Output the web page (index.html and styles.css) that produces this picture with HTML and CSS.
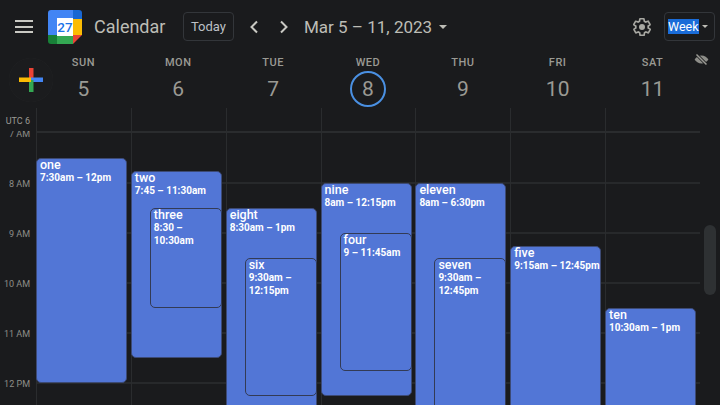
FILE: index.html
```html
<!DOCTYPE html>
<html lang="en">
<head>
  <meta charset="UTF-8" />
  <title>Calendar - Week of March 5, 2023</title>
  <link rel="stylesheet" href="styles.css">
</head>
<body>
  <header class="topbar">
    <div class="menu-btn"><span></span><span></span><span></span></div>
    <svg class="logo" width="34" height="34" viewBox="0 0 34 34">
      <path d="M3 0H25V9H9V25H0V3A3 3 0 0 1 3 0Z" fill="#4285f4"/>
      <path d="M25 0H31A3 3 0 0 1 34 3V9H25Z" fill="#1967d2"/>
      <rect x="25" y="9" width="9" height="16" fill="#fbbc04"/>
      <path d="M0 25H9V34H3A3 3 0 0 1 0 31Z" fill="#188038"/>
      <rect x="9" y="25" width="16" height="9" fill="#34a853"/>
      <path d="M25 25H34L25 34Z" fill="#ea4335"/>
      <rect x="9" y="8" width="16" height="18" fill="#fff"/>
      <text x="17" y="22" text-anchor="middle" class="logo-num">27</text>
    </svg>
    <span class="app-name">Calendar</span>
    <div class="today-btn">Today</div>
    <svg class="arrow prev" width="10" height="14" viewBox="0 0 10 14"><path d="M8 1.5 2.5 7 8 12.5" /></svg>
    <svg class="arrow next" width="10" height="14" viewBox="0 0 10 14"><path d="M2 1.5 7.5 7 2 12.5" /></svg>
    <div class="date-range">Mar 5 – 11, 2023</div>
    <span class="caret date-caret"></span>
    <svg class="gear" width="20" height="20" viewBox="0 0 24 24">
      <path d="M19.4 13c.1-.3.1-.7.1-1s0-.7-.1-1l2.1-1.6c.2-.2.2-.4.1-.6l-2-3.5c-.1-.2-.4-.3-.6-.2l-2.5 1c-.5-.4-1.100-.7-1.700-1l-.4-2.600c0-.3-.2-.4-.5-.4h-4c-.3 0-.5.100-.5.400l-.4 2.600c-.6.300-1.200.6-1.700 1l-2.500-1c-.2-.100-.5 0-.6.200l-2 3.500c-.1.200-.1.400.1.600L4.600 11c-.1.300-.1.700-.1 1s0 .7.100 1l-2.100 1.600c-.2.200-.2.400-.1.600l2 3.500c.1.200.4.300.6.200l2.500-1c.5.400 1.100.700 1.700 1l.4 2.600c0 .3.200.4.500.4h4c.3 0 .5-.1.500-.4l.4-2.600c.6-.3 1.200-.6 1.700-1l2.500 1c.2.100.5 0 .6-.2l2-3.500c.1-.2.100-.4-.1-.6Z" class="gear-body"/>
      <circle cx="12" cy="12" r="3.600" class="gear-hub"/>
    </svg>
    <div class="view-select"><span class="selected-text">Week</span><span class="caret small"></span></div>
  </header>

  <div class="fab">
    <svg width="26" height="26" viewBox="0 0 26 26">
      <rect x="11" y="1" width="4.500" height="12" fill="#ea4335"/>
      <rect x="13" y="10.500" width="12" height="4.500" fill="#4285f4"/>
      <rect x="11" y="13" width="4.500" height="12" fill="#34a853"/>
      <rect x="1" y="10.500" width="12" height="4.500" fill="#fbbc04"/>
    </svg>
  </div>

  <div class="day-head">
    <div class="day-label"><span class="day-name">SUN</span><span class="day-num">5</span></div>
    <div class="day-label"><span class="day-name">MON</span><span class="day-num">6</span></div>
    <div class="day-label"><span class="day-name">TUE</span><span class="day-num">7</span></div>
    <div class="day-label"><span class="day-name">WED</span><span class="day-num today">8</span></div>
    <div class="day-label"><span class="day-name">THU</span><span class="day-num">9</span></div>
    <div class="day-label"><span class="day-name">FRI</span><span class="day-num">10</span></div>
    <div class="day-label"><span class="day-name">SAT</span><span class="day-num">11</span></div>
    <svg class="eye-off" width="15" height="15" viewBox="0 0 24 24">
      <path d="M12 5.500C7 5.500 3 8.500 1 12c2 3.500 6 6.500 11 6.500S21 15.500 23 12c-2-3.500-6-6.500-11-6.500Z" fill="#8d8d88"/>
      <path d="M4 4 20 20" stroke="#1a1b1d" stroke-width="5"/>
      <path d="M4 4 20 20" stroke="#9a9a94" stroke-width="2.400"/>
    </svg>
  </div>

  <main class="schedule">
    <div class="gutter">
      <div class="utc">UTC 6</div>
      <div class="hours">
        <div class="hour">7 AM</div>
        <div class="hour">8 AM</div>
        <div class="hour">9 AM</div>
        <div class="hour">10 AM</div>
        <div class="hour">11 AM</div>
        <div class="hour">12 PM</div>
      </div>
    </div>

    <div class="week">
      <div class="day">
        <div class="event" style="top: 50px; height: 225px"><b>one</b><span>7:30am – 12pm</span></div>
      </div>
      <div class="day">
        <div class="event" style="top: 62.5px; height: 187.5px"><b>two</b><span>7:45 – 11:30am</span></div>
        <div class="event nested" style="top: 100px; height: 100px"><b>three</b><span>8:30 – 10:30am</span></div>
      </div>
      <div class="day">
        <div class="event" style="top: 100px; height: 325px"><b>eight</b><span>8:30am – 1pm</span></div>
        <div class="event nested" style="top: 150px; height: 138px"><b>six</b><span>9:30am – 12:15pm</span></div>
      </div>
      <div class="day">
        <div class="event" style="top: 75px; height: 213px"><b>nine</b><span>8am – 12:15pm</span></div>
        <div class="event nested" style="top: 125px; height: 138px"><b>four</b><span>9 – 11:45am</span></div>
      </div>
      <div class="day">
        <div class="event" style="top: 75px; height: 525px"><b>eleven</b><span>8am – 6:30pm</span></div>
        <div class="event nested" style="top: 150px; height: 163px"><b>seven</b><span>9:30am – 12:45pm</span></div>
      </div>
      <div class="day">
        <div class="event" style="top: 137.5px; height: 175px"><b>five</b><span>9:15am – 12:45pm</span></div>
      </div>
      <div class="day">
        <div class="event" style="top: 200px; height: 125px"><b>ten</b><span>10:30am – 1pm</span></div>
      </div>
    </div>

    <div class="scroll-thumb"></div>
  </main>
</body>
</html>
```

FILE: styles.css
```css
* {
  box-sizing: border-box;
}

html,
body {
  margin: 0;
  height: 405px;
  overflow: hidden;
}

body {
  position: relative;
  font-family: Roboto, "Liberation Sans", sans-serif;
  background-color: #1a1b1d;
  color: #bdc1c6;
}

.topbar {
  display: flex;
  align-items: center;
  height: 53px;
  padding-left: 15px;
}

.menu-btn {
  display: flex;
  flex-direction: column;
  gap: 3.500px;
  width: 18px;
  margin-right: 15px;
}

.menu-btn span {
  height: 2px;
  background-color: #c9c9c3;
}

.logo {
  flex: none;
  margin-right: 12px;
}

.logo-num {
  font-family: Roboto, sans-serif;
  font-size: 13.500px;
  font-weight: 500;
  fill: #1a73e8;
}

.app-name {
  width: 89px;
  font-size: 18px;
  color: #bdbdb6;
}

.today-btn {
  width: 51px;
  height: 29px;
  margin-right: 15px;
  border: 1px solid #33363a;
  border-radius: 4px;
  font-size: 13px;
  line-height: 27px;
  text-align: center;
}

.arrow {
  flex: none;
  fill: none;
  stroke: #c9c9c3;
  stroke-width: 2;
}

.prev {
  margin-right: 20px;
}

.next {
  margin-right: 15px;
}

.date-range {
  flex: none;
  width: 135px;
  font-size: 17px;
  white-space: nowrap;
  color: #bdbdb6;
}

.caret {
  display: inline-block;
  flex: none;
  width: 0;
  height: 0;
  border-left: 4.500px solid transparent;
  border-right: 4.500px solid transparent;
  border-top: 4.500px solid #bdbdb6;
}

.caret.small {
  border-left-width: 3px;
  border-right-width: 3px;
  border-top-width: 3px;
}

.gear {
  flex: none;
  margin-left: 185px;
  margin-right: 12px;
}

.gear-body {
  fill: none;
  stroke: #a8a8a2;
  stroke-width: 2;
}

.gear-hub {
  fill: #a8a8a2;
}

.view-select {
  display: flex;
  align-items: center;
  gap: 3px;
  width: 51px;
  height: 29px;
  padding-left: 3px;
  border: 1px solid #33363a;
  border-radius: 4px;
  font-size: 12.500px;
}

.selected-text {
  line-height: 15px;
  background-color: #1a6cd8;
  color: #fff;
}

.fab {
  position: absolute;
  left: 9px;
  top: 58px;
  width: 44px;
  height: 44px;
  display: flex;
  align-items: center;
  justify-content: center;
  border-radius: 50%;
  background-color: #1b1c1e;
  box-shadow: 0 0 1px rgba(255, 255, 255, 0.07);
  z-index: 2;
}

.day-head {
  position: relative;
  display: grid;
  grid-template-columns: repeat(7, 94.850px);
  height: 55px;
  padding-left: 36px;
}

.day-label {
  display: flex;
  flex-direction: column;
  align-items: center;
}

.day-name {
  margin-top: 3px;
  font-size: 11px;
  font-weight: 500;
  line-height: 13px;
  letter-spacing: 0.5px;
  color: #9a9a94;
}

.day-num {
  width: 36px;
  height: 36px;
  margin-top: 2px;
  font-size: 21px;
  line-height: 36px;
  text-align: center;
  color: #9a9a94;
}

.day-num.today {
  border: 2px solid #4a90e2;
  border-radius: 50%;
  line-height: 32px;
}

.eye-off {
  position: absolute;
  left: 694px;
  top: -1px;
}

.schedule {
  position: relative;
  display: flex;
  height: 297px;
  overflow: hidden;
}

.gutter {
  flex: none;
  display: flex;
  flex-direction: column;
  width: 36px;
  height: 297px;
}

.utc {
  flex: none;
  height: 23px;
  padding-top: 7px;
  padding-right: 6px;
  font-size: 9px;
  line-height: 12px;
  text-align: right;
  color: #9a9a94;
}

.hours {
  flex: 1;
  overflow: hidden;
}

.hour {
  height: 50px;
  padding-right: 6px;
  font-size: 9px;
  line-height: 50px;
  text-align: right;
  color: #8e8e88;
}

.hour:first-child {
  margin-top: -22px;
}

.week {
  display: grid;
  grid-template-columns: repeat(7, 94.850px);
  width: 664px;
  height: 297px;
  overflow: hidden;
  background-image: linear-gradient(#2a2c2e, #2a2c2e), repeating-linear-gradient(to bottom, transparent 0, transparent 48px, #27292b 48px, #27292b 50px);
  background-size: 100% 2px, 100% 100%;
  background-position: 0 23px, 0 26px;
  background-repeat: no-repeat;
}

.day {
  position: relative;
  border-left: 1px solid #2a2c2e;
}

.event {
  position: absolute;
  left: -1px;
  width: 91px;
  padding: 0 1px 0 3px;
  background-color: #5276d6;
  border: 1px solid #3c4a75;
  border-radius: 5px;
  color: #fff;
  overflow: hidden;
}

.event.nested {
  left: 18px;
  width: 72px;
  border-color: #333b55;
}

.event b {
  display: block;
  font-size: 12.500px;
  font-weight: 500;
  line-height: 12px;
}

.event span {
  display: block;
  margin-top: 1px;
  margin-right: -4px;
  font-size: 10px;
  font-weight: 700;
  line-height: 12.500px;
}

.event.nested span {
  margin-right: 0;
}

.scroll-thumb {
  position: absolute;
  left: 704px;
  top: 117px;
  width: 12px;
  height: 70px;
  border-radius: 6px;
  background-color: #2e3133;
}
```
